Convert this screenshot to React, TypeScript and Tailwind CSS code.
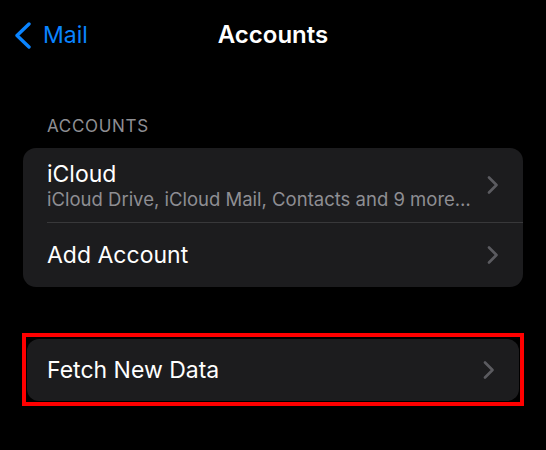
import React from 'react';

function Chevron() {
  return (
    <svg width="12" height="18" viewBox="0 0 12 18" fill="none" className="shrink-0">
      <polyline points="2,1.5 9.5,9 2,16.5" stroke="#5b5b60" strokeWidth="2.6" strokeLinecap="round" strokeLinejoin="round" />
    </svg>
  );
}

function Row({ title, subtitle }: { title: string; subtitle?: string }) {
  return (
    <div className="flex items-center justify-between pr-[24px]">
      <div className="flex flex-col">
        <span className="text-[23px] leading-[28px] text-white">{title}</span>
        {subtitle && <span className="text-[18.5px] leading-[23px] text-[#8e8e93]">{subtitle}</span>}
      </div>
      <Chevron />
    </div>
  );
}

export default function App() {
  return (
    <div className="w-[546px] h-[450px] bg-black overflow-hidden" style={{ fontFamily: 'Inter, "Noto Sans", sans-serif' }}>
      {/* nav bar */}
      <div className="grid grid-cols-[1fr_auto_1fr] items-center h-[70px]">
        <div className="flex items-center gap-[12px] pl-[14px]">
          <svg width="17" height="27" viewBox="0 0 17 27" fill="none">
            <polyline points="15,2 3,13.5 15,25" stroke="#0a84ff" strokeWidth="3.4" strokeLinecap="round" strokeLinejoin="round" />
          </svg>
          <span className="text-[23px] text-[#0a84ff]">Mail</span>
        </div>
        <span className="text-[24px] font-semibold text-white">Accounts</span>
        <div />
      </div>

      <div className="px-[23px]">
        <div className="pl-[24px] pt-[45px] pb-[11px] text-[17px] leading-[22px] tracking-[0.04em] text-[#8e8e93] uppercase">Accounts</div>

        <div className="rounded-[13px] bg-[#1c1c1e] overflow-hidden">
          <div className="pl-[24px] h-[74px] flex flex-col justify-center">
            <Row title="iCloud" subtitle="iCloud Drive, iCloud Mail, Contacts and 9 more…" />
          </div>
          <div className="ml-[24px] h-px bg-[#38383a]" />
          <div className="pl-[24px] h-[64px] flex flex-col justify-center">
            <Row title="Add Account" />
          </div>
        </div>

        <div className="mt-[46px] -mx-px border-4 border-[#ff0000] px-px pt-[2px] pb-px">
          <div className="rounded-[12px] bg-[#1c1c1e] h-[62px] pl-[20px] flex flex-col justify-center">
            <Row title="Fetch New Data" />
          </div>
        </div>
      </div>
    </div>
  );
}
